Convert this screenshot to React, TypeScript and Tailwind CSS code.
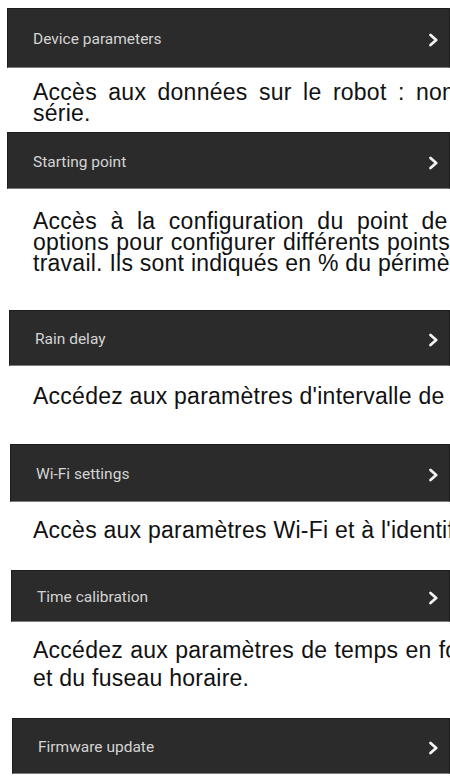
const Chevron = () => (
  <svg width="11" height="14" viewBox="0 0 11 14" fill="none" className="shrink-0">
    <path d="M2.5 2 L8.2 7 L2.5 12" stroke="#f2f2f2" strokeWidth="2.8" strokeLinecap="round" strokeLinejoin="round" />
  </svg>
);

const Bar = ({ label, className }: { label: string; className: string }) => (
  <div
    className={`flex items-center justify-between bg-[#2b2b2b] border border-[#1d1d1d] border-b-[#7b7b7b] pl-[25px] pr-[10px] pt-[4px] ${className}`}
  >
    <span className="font-['Roboto',sans-serif] text-[15.5px] font-normal text-[#d4d4d4]">{label}</span>
    <Chevron />
  </div>
);

const para = "ml-[33px] font-['Liberation_Sans',Arial,sans-serif] text-[23px] tracking-[0.25px] leading-[21px] text-[#111111]";

export default function App() {
  return (
    <div className="w-[450px] h-[776px] overflow-hidden bg-white pt-[8px]">
      <Bar label="Device parameters" className="ml-[7px] h-[60px]" />
      <p className={`${para} mt-[14px] w-[588px] text-justify`}>
        Accès aux données sur le robot : nom et numéro de série.
      </p>

      <Bar label="Starting point" className="mt-[8px] ml-[7px] h-[57px]" />
      <p className={`${para} mt-[22px] w-[558px] text-justify`}>
        Accès à la configuration du point de départ avec options pour configurer différents points de départ de
        travail. Ils sont indiqués en % du périmètre.
      </p>

      <Bar label="Rain delay" className="mt-[36px] ml-[9px] h-[56px]" />
      <p className={`${para} mt-[20px] whitespace-nowrap`}>Accédez aux paramètres d'intervalle de pluie.</p>

      <Bar label="Wi-Fi settings" className="mt-[37px] ml-[10px] h-[58px]" />
      <p className={`${para} mt-[18px] whitespace-nowrap`}>Accès aux paramètres Wi-Fi et à l'identifiant.</p>

      <Bar label="Time calibration" className="mt-[29px] ml-[11px] h-[52px]" />
      <p className={`${para} mt-[14px] w-[600px] text-justify !leading-[28px]`}>
        Accédez aux paramètres de temps en fonction de la date et du fuseau horaire.
      </p>

      <Bar label="Firmware update" className="mt-[26px] ml-[12px] h-[56px]" />
    </div>
  );
}
